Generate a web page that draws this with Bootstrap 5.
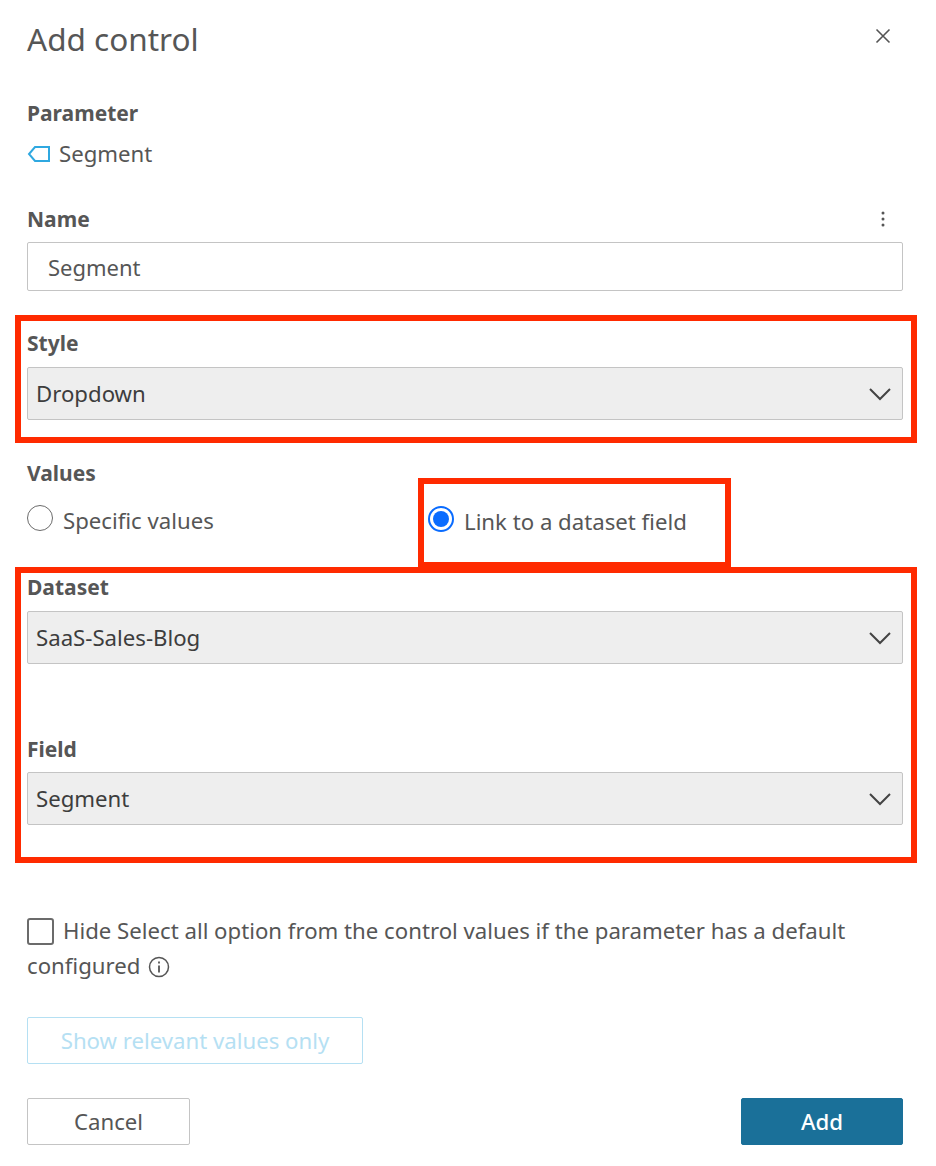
<!DOCTYPE html>
<html lang="en">
<head>
    <meta charset="UTF-8">
    <meta name="viewport" content="width=device-width, initial-scale=1.0">
    <title>Add control</title>
    <link href="https://cdn.jsdelivr.net/npm/bootstrap@5.3.0/dist/css/bootstrap.min.css" rel="stylesheet">
    <style>
        body {
            font-family: "Noto Sans", "Liberation Sans", sans-serif;
            font-size: 22.2px;
            color: #565656;
            background: #fff;
        }
        .panel {
            width: 876px;
            margin-left: 27px;
            padding-top: 19px;
        }
        .panel-title {
            font-size: 31.5px;
            line-height: 40px;
            font-weight: 400;
            margin: 0;
            color: #565656;
        }
        .close-x { margin: 9px 12px 0 0; }
        .kebab { margin-right: 17px; }
        .field-label {
            display: block;
            font-size: 21px;
            font-weight: 700;
            line-height: 28px;
            margin: 0;
        }
        .param-label { margin-top: 40px; }
        .line-text { line-height: 28px; margin-top: 13px; }
        .name-row { margin-top: 37px; }
        .name-input {
            height: 49px;
            margin-top: 9px;
            padding: 0 20px;
            font-size: 22px;
            color: #565656;
            border-color: #c4c4c4;
            border-radius: 2px;
        }
        .pick {
            height: 53px;
            padding: 0 40px 0 8px;
            font-size: 22.2px;
            color: #3d3d3d;
            background-color: #eee;
            border-color: #c4c4c4;
            border-radius: 2px;
            background-size: 24px 14px;
            background-position: right 10px center;
            background-image: url("data:image/svg+xml,%3csvg xmlns='http://www.w3.org/2000/svg' viewBox='0 0 24 14'%3e%3cpath fill='none' stroke='%23444' stroke-width='2' d='M2 2l10 10L22 2'/%3e%3c/svg%3e");
        }
        .callout {
            border: 6px solid #ff2a00;
            margin-left: -12px;
            margin-right: -14px;
            padding-left: 6px;
            padding-right: 8px;
        }
        .callout-style { margin-top: 24px; padding-top: 8px; padding-bottom: 17px; }
        .callout-style .pick { margin-top: 10px; }
        .callout-data { margin-top: -1px; padding-top: 0; padding-bottom: 32px; }
        .pick-dataset { margin-top: 10px; }
        .field-gap { margin-top: 71px; }
        .pick-field { margin-top: 9px; }
        .callout-link { width: 313px; height: 90px; padding: 24px 0 0 4px; align-self: flex-end; margin-left: 0; margin-right: 0; }
        .values-row { margin-top: 16px; height: 109px; }
        .values-left { width: 391px; }
        .values-left .radio-line { margin-top: 20px; }
        .radio-line { height: 28px; line-height: 28px; }
        .radio-line .form-check-input {
            width: 26px;
            height: 26px;
            margin: -6px 10px 0 0;
            border-color: #6b6b6b;
            flex-shrink: 0;
        }
        .radio-line .form-check-input:checked {
            background-color: #fff;
            border: 2px solid #0a6cff;
            background-size: 100% 100%;
            background-image: url("data:image/svg+xml,%3csvg xmlns='http://www.w3.org/2000/svg' viewBox='0 0 22 22'%3e%3ccircle cx='11' cy='11' r='8' fill='%230a6cff'/%3e%3c/svg%3e");
        }
        .hide-opt { margin-top: 50px; line-height: 35px; }
        .hide-opt .form-check-input {
            width: 27px;
            height: 27px;
            margin: 0 9px 0 0;
            vertical-align: -6px;
            float: none;
            border: 2px solid #6b6b6b;
            border-radius: 3px;
        }
        .info-mark { margin-left: 2px; vertical-align: -4px; }
        .relevant-btn {
            display: block;
            width: 336px;
            height: 47px;
            margin-top: 34px;
            padding: 0;
            font-size: 22.2px;
            border-radius: 2px;
            background: #fff;
        }
        .relevant-btn:disabled {
            opacity: 1;
            color: #b5e0f3;
            border: 1px solid #b5e0f3;
        }
        .foot-row { margin-top: 34px; }
        .foot-btn {
            height: 47px;
            padding: 0;
            font-size: 22.2px;
            border-radius: 2px;
        }
        .foot-cancel { width: 163px; color: #565656; background: #fff; border: 1px solid #c4c4c4; }
        .foot-add { width: 162px; color: #fff; font-weight: 500; background: #1a7099; border: 1px solid #1a7099; }
    </style>
</head>
<body>
    <div class="panel">
        <div class="d-flex justify-content-between align-items-start">
            <h1 class="panel-title">Add control</h1>
            <svg class="close-x" width="16" height="16" viewBox="0 0 16 16"><path fill="none" stroke="#555" stroke-width="1.6" d="M1.5 1.5l13 13M14.5 1.5l-13 13"/></svg>
        </div>

        <label class="field-label param-label">Parameter</label>
        <div class="d-flex align-items-center line-text">
            <svg class="me-2" width="24" height="18" viewBox="0 0 24 18"><path fill="none" stroke="#2fa8e0" stroke-width="2" d="M22 2H8L2 9l6 7h14z"/></svg>
            <span>Segment</span>
        </div>

        <div class="d-flex justify-content-between align-items-center name-row">
            <label class="field-label">Name</label>
            <svg class="kebab" width="6" height="16" viewBox="0 0 6 16"><circle cx="3" cy="2" r="1.5" fill="#555"/><circle cx="3" cy="8" r="1.5" fill="#555"/><circle cx="3" cy="14" r="1.5" fill="#555"/></svg>
        </div>
        <input class="form-control name-input" type="text" value="Segment">

        <div class="callout callout-style">
            <label class="field-label">Style</label>
            <select class="form-select pick"><option>Dropdown</option></select>
        </div>

        <div class="d-flex values-row">
            <div class="values-left align-self-start">
                <label class="field-label">Values</label>
                <div class="d-flex align-items-center radio-line">
                    <input class="form-check-input" type="radio" name="vals">
                    <span>Specific values</span>
                </div>
            </div>
            <div class="callout callout-link">
                <div class="d-flex align-items-center radio-line">
                    <input class="form-check-input" type="radio" name="vals" checked>
                    <span>Link to a dataset field</span>
                </div>
            </div>
        </div>

        <div class="callout callout-data">
            <label class="field-label">Dataset</label>
            <select class="form-select pick pick-dataset"><option>SaaS-Sales-Blog</option></select>
            <label class="field-label field-gap">Field</label>
            <select class="form-select pick pick-field"><option>Segment</option></select>
        </div>

        <div class="hide-opt">
            <input class="form-check-input" type="checkbox">Hide Select all option from the control values if the parameter has a default configured
            <svg class="info-mark" width="22" height="22" viewBox="0 0 22 22"><circle cx="11" cy="11" r="9.5" fill="none" stroke="#555" stroke-width="1.5"/><path fill="none" stroke="#555" stroke-width="1.8" d="M11 9.5v7M11 5.5v2"/></svg>
        </div>

        <button class="btn relevant-btn" disabled>Show relevant values only</button>

        <div class="d-flex justify-content-between foot-row">
            <button class="btn foot-btn foot-cancel">Cancel</button>
            <button class="btn foot-btn foot-add">Add</button>
        </div>
    </div>
    <script src="https://cdn.jsdelivr.net/npm/bootstrap@5.3.0/dist/js/bootstrap.bundle.min.js"></script>
</body>
</html>
